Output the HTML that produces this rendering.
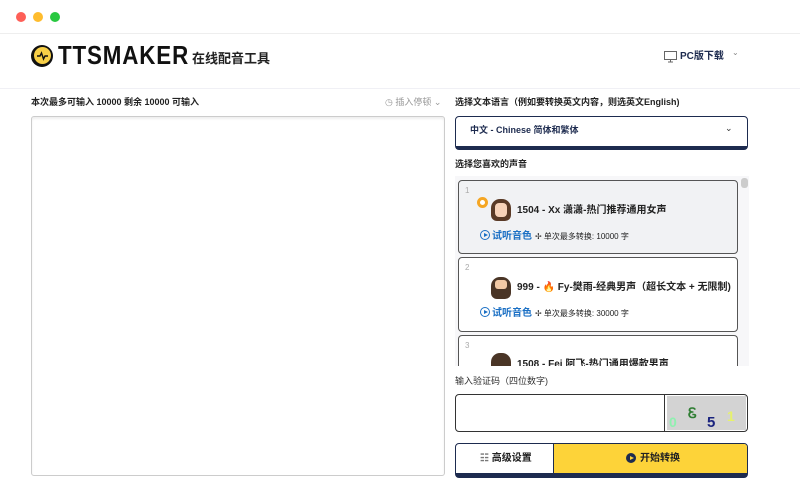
<!DOCTYPE html><html><head><meta charset="utf-8"><style>
*{box-sizing:border-box;margin:0;padding:0}
body{width:800px;height:479px;overflow:hidden;background:#fff;font-family:"Liberation Sans","Noto Sans CJK SC",sans-serif;color:#222;position:relative;line-height:1.3}
.a{position:absolute;white-space:nowrap}
.dot{position:absolute;top:12px;width:10px;height:10px;border-radius:50%}
.card{position:absolute;left:458px;width:280px;border:1px solid #555;border-radius:4px;background:#fff}
.num{position:absolute;left:6px;top:5px;font-size:8px;color:#aaa}
.name{position:absolute;left:58px;font-size:10px;font-weight:bold;color:#222;white-space:nowrap}
.av{position:absolute;left:32px;width:20px;height:22px;border-radius:9px 9px 6px 6px}
.play{position:absolute;left:21px;font-size:10px;color:#1a6fc4;font-weight:bold}
.play i{display:inline-block;width:10px;height:10px;border:1px solid #1a6fc4;border-radius:50%;vertical-align:-1px;margin-right:2px;position:relative}
.play i:after{content:"";position:absolute;left:3px;top:2px;border-left:4px solid #1a6fc4;border-top:2.5px solid transparent;border-bottom:2.5px solid transparent}
.lim{position:absolute;left:76px;font-size:8px;color:#222}
</style></head><body>
<div class="a" style="left:0;top:0;width:800px;height:34px;border-bottom:1px solid #eee"></div>
<div class="dot" style="left:16px;background:#fe5f57"></div>
<div class="dot" style="left:33px;background:#febc2e"></div>
<div class="dot" style="left:50px;background:#28c840"></div>
<div class="a" style="left:31px;top:45px;width:22px;height:22px;border-radius:50%;background:#111"></div>
<div class="a" style="left:34px;top:47px;width:17px;height:17px;border-radius:50%;background:#f7cf47"></div>
<svg class="a" style="left:34px;top:47px" width="17" height="17"><path d="M3 9h3l1.5-3 2 6 1.5-3h3" stroke="#111" stroke-width="1.4" fill="none"/></svg>
<div class="a" style="left:58px;top:41px;font-size:26px;line-height:1.1;font-weight:bold;color:#111;letter-spacing:1px;transform:scaleX(.86);transform-origin:left top">TTSMAKER</div>
<div class="a" style="left:192px;top:51px;font-size:13px;font-weight:bold;color:#222">在线配音工具</div>
<svg class="a" style="left:664px;top:51px" width="13" height="12"><rect x="0.5" y="0.5" width="12" height="8" fill="none" stroke="#666"/><path d="M4 11h5M6.5 9v2" stroke="#666"/></svg>
<div class="a" style="left:680px;top:50px;font-size:10px;font-weight:bold;color:#1d2b4f">PC版下载</div>
<div class="a" style="left:732px;top:48px;font-size:8px;color:#888">⌄</div>
<div class="a" style="left:0;top:88px;width:800px;height:1px;background:#f0f0f5"></div>
<div class="a" style="left:31px;top:97px;font-size:9px;font-weight:bold;color:#222">本次最多可输入 10000 剩余 10000 可输入</div>
<div class="a" style="left:385px;top:97px;font-size:9px;color:#999">◷ 插入停顿 ⌄</div>
<div class="a" style="left:31px;top:116px;width:414px;height:360px;border:1px solid #ccc;border-radius:3px;box-shadow:inset 0 2px 2px #eee"></div>
<div class="a" style="left:455px;top:97px;font-size:9px;font-weight:bold;color:#222">选择文本语言（例如要转换英文内容，则选英文English)</div>
<div class="a" style="left:455px;top:116px;width:293px;height:34px;border:1px solid #1d2b4f;border-bottom:4px solid #1d2b4f;border-radius:4px"></div>
<div class="a" style="left:470px;top:125px;font-size:9px;font-weight:bold;color:#1d2b4f">中文 - Chinese 简体和繁体</div>
<div class="a" style="left:725px;top:123px;font-size:9px;color:#333">⌄</div>
<div class="a" style="left:455px;top:159px;font-size:9px;font-weight:bold;color:#222">选择您喜欢的声音</div>
<div class="a" style="left:455px;top:176px;width:294px;height:190px;background:#f7f7f9;overflow:hidden"></div>
<div class="a" style="left:741px;top:178px;width:7px;height:10px;background:#ccc;border-radius:3px"></div>
<div class="card" style="top:180px;height:74px;background:#f1f2f4"><div class="num">1</div>
<div class="a" style="left:18px;top:16px;width:11px;height:11px;border:3px solid #f5a623;border-radius:50%;background:#fff"></div>
<div class="av" style="top:18px;background:#5a3a26"></div><div class="a" style="left:36px;top:22px;width:12px;height:14px;background:#f7d2b8;border-radius:4px"></div>
<div class="name" style="top:23px">1504 - Xx 潇潇-热门推荐通用女声</div>
<div class="play" style="top:49px"><i></i>试听音色</div><div class="lim" style="top:51px">✢ 单次最多转换: 10000 字</div></div>
<div class="card" style="top:257px;height:75px"><div class="num">2</div>
<div class="av" style="top:19px;background:#4a3526"></div><div class="a" style="left:36px;top:22px;width:12px;height:9px;background:#f2c9a5;border-radius:3px"></div>
<div class="name" style="top:23px">999 - <span style="color:#f36b1c">🔥</span> Fy-樊雨-经典男声（超长文本 + 无限制)</div>
<div class="play" style="top:49px"><i></i>试听音色</div><div class="lim" style="top:51px">✢ 单次最多转换: 30000 字</div></div>
<div class="card" style="top:335px;height:31px;border-bottom:none;border-radius:4px 4px 0 0;overflow:hidden"><div class="num">3</div>
<div class="av" style="top:17px;background:#4a3526"></div>
<div class="name" style="top:22px">1508 - Fei 阿飞-热门通用爆款男声</div></div>
<div class="a" style="left:455px;top:376px;font-size:9px;color:#333">输入验证码（四位数字)</div>
<div class="a" style="left:455px;top:394px;width:293px;height:38px;border:1px solid #333;border-radius:4px"></div>
<div class="a" style="left:664px;top:394px;width:1px;height:38px;background:#333"></div>
<div class="a" style="left:667px;top:396px;width:79px;height:34px;background:#d3d3d3"></div>
<div class="a" style="left:669px;top:413px;font-size:14px;font-weight:bold;color:#8ff0b0">0</div>
<div class="a" style="left:688px;top:404px;font-size:14px;font-weight:bold;color:#2e7d32">Ꮛ</div>
<div class="a" style="left:707px;top:413px;font-size:15px;font-weight:bold;color:#1a237e">5</div>
<div class="a" style="left:727px;top:407px;font-size:14px;font-weight:bold;color:#e6f26b">1</div>
<div class="a" style="left:455px;top:443px;width:293px;height:35px;border:1px solid #1d2b4f;border-bottom:5px solid #1d2b4f;border-radius:4px;overflow:hidden;background:#fff">
<div class="a" style="left:97px;top:0;width:196px;height:30px;background:#fdd339;border-left:1px solid #1d2b4f"></div></div>
<div class="a" style="left:480px;top:452px;font-size:10px;font-weight:bold;color:#222"><span style="color:#777">☷</span> 高级设置</div>
<div class="a" style="left:626px;top:453px;width:10px;height:10px;border-radius:50%;background:#1d2b4f"></div>
<div class="a" style="left:630px;top:455.5px;border-left:4px solid #fdd339;border-top:2.5px solid transparent;border-bottom:2.5px solid transparent"></div>
<div class="a" style="left:640px;top:452px;font-size:10px;font-weight:bold;color:#222">开始转换</div>
</body></html>
